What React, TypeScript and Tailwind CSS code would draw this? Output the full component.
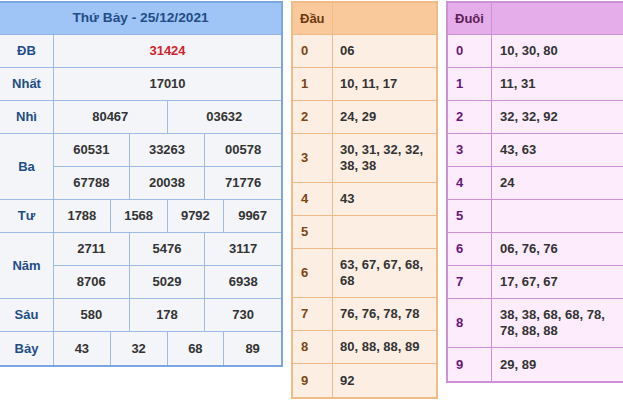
import React from "react";

const cell = "flex items-center justify-center border-r border-b border-[#9dbbe3] bg-[#f3f5f9]";

function KQ() {
  return (
    <div className="w-[283px] shrink-0 mt-px border-t-2 border-r-2 border-b-2 border-[#7aa6e2]">
      <div className="h-[32px] flex items-center justify-center bg-[#9fc4f6] border-b border-[#8fb4e4] text-[#1f4d87] text-[13.7px]">
        Thứ Bảy - 25/12/2021
      </div>
      <div className="grid grid-cols-[54px_repeat(12,minmax(0,1fr))] auto-rows-[33px] [&>div:nth-last-child(-n+5)]:border-b-0 [&>div]:text-[#333]">
        <div className={`${cell} !text-[#1f4d87]`}>ĐB</div>
        <div className={`${cell} col-span-12 border-r-0 !text-[#d2232a]`}>31424</div>

        <div className={`${cell} !text-[#1f4d87]`}>Nhất</div>
        <div className={`${cell} col-span-12 border-r-0`}>17010</div>

        <div className={`${cell} !text-[#1f4d87]`}>Nhì</div>
        <div className={`${cell} col-span-6`}>80467</div>
        <div className={`${cell} col-span-6 border-r-0`}>03632</div>

        <div className={`${cell} row-span-2 !text-[#1f4d87]`}>Ba</div>
        <div className={`${cell} col-span-4`}>60531</div>
        <div className={`${cell} col-span-4`}>33263</div>
        <div className={`${cell} col-span-4 border-r-0`}>00578</div>
        <div className={`${cell} col-span-4`}>67788</div>
        <div className={`${cell} col-span-4`}>20038</div>
        <div className={`${cell} col-span-4 border-r-0`}>71776</div>

        <div className={`${cell} !text-[#1f4d87]`}>Tư</div>
        <div className={`${cell} col-span-3`}>1788</div>
        <div className={`${cell} col-span-3`}>1568</div>
        <div className={`${cell} col-span-3`}>9792</div>
        <div className={`${cell} col-span-3 border-r-0`}>9967</div>

        <div className={`${cell} row-span-2 !text-[#1f4d87]`}>Năm</div>
        <div className={`${cell} col-span-4`}>2711</div>
        <div className={`${cell} col-span-4`}>5476</div>
        <div className={`${cell} col-span-4 border-r-0`}>3117</div>
        <div className={`${cell} col-span-4`}>8706</div>
        <div className={`${cell} col-span-4`}>5029</div>
        <div className={`${cell} col-span-4 border-r-0`}>6938</div>

        <div className={`${cell} !text-[#1f4d87]`}>Sáu</div>
        <div className={`${cell} col-span-4`}>580</div>
        <div className={`${cell} col-span-4`}>178</div>
        <div className={`${cell} col-span-4 border-r-0`}>730</div>

        <div className={`${cell} !text-[#1f4d87]`}>Bảy</div>
        <div className={`${cell} col-span-3`}>43</div>
        <div className={`${cell} col-span-3`}>32</div>
        <div className={`${cell} col-span-3`}>68</div>
        <div className={`${cell} col-span-3 border-r-0`}>89</div>
      </div>
    </div>
  );
}

const dau: [string, string][] = [
  ["0", "06"],
  ["1", "10, 11, 17"],
  ["2", "24, 29"],
  ["3", "30, 31, 32, 32, 38, 38"],
  ["4", "43"],
  ["5", ""],
  ["6", "63, 67, 67, 68, 68"],
  ["7", "76, 76, 78, 78"],
  ["8", "80, 88, 88, 89"],
  ["9", "92"],
];

const duoi: [string, string][] = [
  ["0", "10, 30, 80"],
  ["1", "11, 31"],
  ["2", "32, 32, 92"],
  ["3", "43, 63"],
  ["4", "24"],
  ["5", ""],
  ["6", "06, 76, 76"],
  ["7", "17, 67, 67"],
  ["8", "38, 38, 68, 68, 78, 78, 88, 88"],
  ["9", "29, 89"],
];

function Dau() {
  return (
    <div className="w-[147px] shrink-0 ml-[8px] mt-px border-2 border-[#f0bb84] self-start">
      <div className="flex h-[32px] bg-[#fac99b] border-b border-[#f0bb84]">
        <div className="w-[40px] shrink-0 border-r border-[#f0bb84] flex items-center pl-[7px] text-[#6b3a10]">Đầu</div>
        <div className="flex-1" />
      </div>
      {dau.map(([k, v], i) => (
        <div key={k} className={`flex min-h-[33px] bg-[#fdeee3] ${i < dau.length - 1 ? "border-b" : ""} border-[#f0bb84]`}>
          <div className="w-[40px] shrink-0 border-r border-[#f0bb84] flex items-center pl-[8px] text-[#7b4611]">{k}</div>
          <div className="flex-1 flex items-center pl-[7px] pr-[4px] py-[8px] leading-[16px] text-[#333]">{v}</div>
        </div>
      ))}
    </div>
  );
}

function Duoi() {
  return (
    <div className="w-[190px] shrink-0 ml-[8px] mt-px border-2 border-[#cd92d5] self-start">
      <div className="flex h-[32px] bg-[#e5aeea] border-b border-[#cd92d5]">
        <div className="w-[44px] shrink-0 border-r border-[#cd92d5] flex items-center pl-[7px] text-[#5b1f55]">Đuôi</div>
        <div className="flex-1" />
      </div>
      {duoi.map(([k, v], i) => (
        <div key={k} className={`flex min-h-[33px] bg-[#fcecfc] ${i < duoi.length - 1 ? "border-b" : ""} border-[#cd92d5]`}>
          <div className="w-[44px] shrink-0 border-r border-[#cd92d5] flex items-center pl-[8px] text-[#6a157a]">{k}</div>
          <div className="w-[136px] flex items-center pl-[8px] pr-[8px] py-[8px] leading-[16px] text-[#333]">{v}</div>
        </div>
      ))}
    </div>
  );
}

export default function App() {
  return (
    <div className="w-[623px] h-[400px] overflow-hidden bg-white flex items-start font-['Liberation_Sans',Arial,sans-serif] text-[13px] font-bold">
      <KQ />
      <Dau />
      <Duoi />
    </div>
  );
}
